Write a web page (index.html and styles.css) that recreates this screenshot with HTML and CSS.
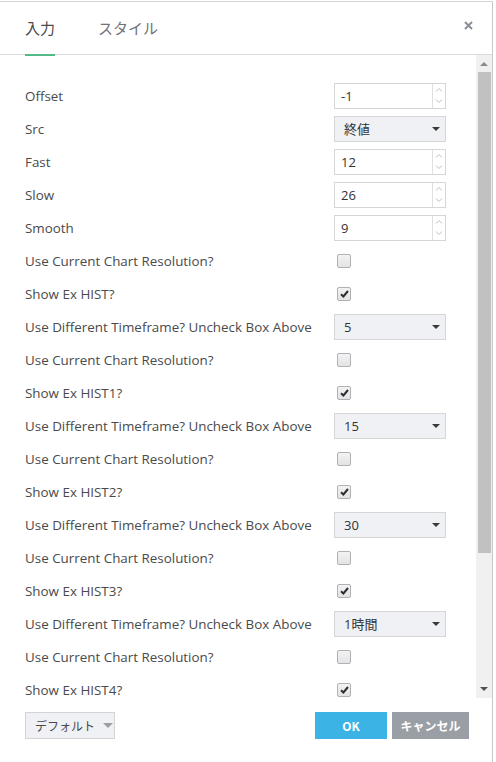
FILE: index.html
```html
<!DOCTYPE html>
<html lang="ja">
<head>
<meta charset="utf-8">
<link rel="stylesheet" href="styles.css">
</head>
<body>
<div class="dialog">
  <div class="header">
    <div class="tab active">入力</div>
    <div class="tab">スタイル</div>
    <div class="close">
      <svg width="9" height="9" viewBox="0 0 9 9"><path d="M1 1L8 8M8 1L1 8" stroke="#8b8f97" stroke-width="2" fill="none"/></svg>
    </div>
  </div>
  <div class="body">
    <div class="content">
      <div class="row"><span class="label">Offset</span>
        <div class="num"><span class="val">-1</span><span class="spin"><svg width="8" height="5" viewBox="0 0 8 5"><path d="M1 4.5L4 1.5L7 4.5" stroke="#b9bcc2" fill="none"/></svg><svg width="8" height="5" viewBox="0 0 8 5"><path d="M1 0.5L4 3.5L7 0.5" stroke="#b9bcc2" fill="none"/></svg></span></div></div>
      <div class="row"><span class="label">Src</span>
        <div class="select"><span class="val">終値</span><span class="caret"></span></div></div>
      <div class="row"><span class="label">Fast</span>
        <div class="num"><span class="val">12</span><span class="spin"><svg width="8" height="5" viewBox="0 0 8 5"><path d="M1 4.5L4 1.5L7 4.5" stroke="#b9bcc2" fill="none"/></svg><svg width="8" height="5" viewBox="0 0 8 5"><path d="M1 0.5L4 3.5L7 0.5" stroke="#b9bcc2" fill="none"/></svg></span></div></div>
      <div class="row"><span class="label">Slow</span>
        <div class="num"><span class="val">26</span><span class="spin"><svg width="8" height="5" viewBox="0 0 8 5"><path d="M1 4.5L4 1.5L7 4.5" stroke="#b9bcc2" fill="none"/></svg><svg width="8" height="5" viewBox="0 0 8 5"><path d="M1 0.5L4 3.5L7 0.5" stroke="#b9bcc2" fill="none"/></svg></span></div></div>
      <div class="row"><span class="label">Smooth</span>
        <div class="num"><span class="val">9</span><span class="spin"><svg width="8" height="5" viewBox="0 0 8 5"><path d="M1 4.5L4 1.5L7 4.5" stroke="#b9bcc2" fill="none"/></svg><svg width="8" height="5" viewBox="0 0 8 5"><path d="M1 0.5L4 3.5L7 0.5" stroke="#b9bcc2" fill="none"/></svg></span></div></div>

      <div class="row"><span class="label">Use Current Chart Resolution?</span><span class="cb"></span></div>
      <div class="row"><span class="label">Show Ex HIST?</span><span class="cb checked"><svg width="9" height="8" viewBox="0 0 9 8"><path d="M1 4.2L3.4 6.5L8 1" stroke="#2e2e2e" stroke-width="2" fill="none"/></svg></span></div>
      <div class="row"><span class="label">Use Different Timeframe? Uncheck Box Above</span>
        <div class="select"><span class="val">5</span><span class="caret"></span></div></div>

      <div class="row"><span class="label">Use Current Chart Resolution?</span><span class="cb"></span></div>
      <div class="row"><span class="label">Show Ex HIST1?</span><span class="cb checked"><svg width="9" height="8" viewBox="0 0 9 8"><path d="M1 4.2L3.4 6.5L8 1" stroke="#2e2e2e" stroke-width="2" fill="none"/></svg></span></div>
      <div class="row"><span class="label">Use Different Timeframe? Uncheck Box Above</span>
        <div class="select"><span class="val">15</span><span class="caret"></span></div></div>

      <div class="row"><span class="label">Use Current Chart Resolution?</span><span class="cb"></span></div>
      <div class="row"><span class="label">Show Ex HIST2?</span><span class="cb checked"><svg width="9" height="8" viewBox="0 0 9 8"><path d="M1 4.2L3.4 6.5L8 1" stroke="#2e2e2e" stroke-width="2" fill="none"/></svg></span></div>
      <div class="row"><span class="label">Use Different Timeframe? Uncheck Box Above</span>
        <div class="select"><span class="val">30</span><span class="caret"></span></div></div>

      <div class="row"><span class="label">Use Current Chart Resolution?</span><span class="cb"></span></div>
      <div class="row"><span class="label">Show Ex HIST3?</span><span class="cb checked"><svg width="9" height="8" viewBox="0 0 9 8"><path d="M1 4.2L3.4 6.5L8 1" stroke="#2e2e2e" stroke-width="2" fill="none"/></svg></span></div>
      <div class="row"><span class="label">Use Different Timeframe? Uncheck Box Above</span>
        <div class="select"><span class="val">1時間</span><span class="caret"></span></div></div>

      <div class="row"><span class="label">Use Current Chart Resolution?</span><span class="cb"></span></div>
      <div class="row"><span class="label">Show Ex HIST4?</span><span class="cb checked"><svg width="9" height="8" viewBox="0 0 9 8"><path d="M1 4.2L3.4 6.5L8 1" stroke="#2e2e2e" stroke-width="2" fill="none"/></svg></span></div>
    </div>
    <div class="scrollbar">
      <span class="arrow up"></span>
      <div class="track"><div class="thumb"></div></div>
      <span class="arrow down"></span>
    </div>
  </div>
  <div class="footer">
    <div class="defaults">デフォルト<span class="dcaret"></span></div>
    <div class="spacer"></div>
    <div class="btn ok">OK</div>
    <div class="btn cancel">キャンセル</div>
  </div>
</div>
</body>
</html>
```
FILE: styles.css
```css
html, body {
  margin: 0;
  padding: 0;
  background: #ffffff;
}
body {
  width: 496px;
  height: 762px;
  overflow: hidden;
  font-family: "Open Sans", "Noto Sans CJK JP", sans-serif;
  color: #4a4a4a;
}
.dialog {
  width: 493px;
  height: 761px;
  margin-top: 1px;
  border-top: 1px solid #d4d4d4;
  border-right: 1px solid #c8c8c8;
  box-sizing: border-box;
  background: #fff;
  display: flex;
  flex-direction: column;
}
.header {
  height: 53px;
  flex: none;
  border-bottom: 1px solid #dcdcdc;
  display: flex;
  align-items: stretch;
  padding-left: 25px;
  position: relative;
  box-sizing: border-box;
}
.tab {
  font-family: "Noto Sans CJK JP", sans-serif;
  font-size: 15px;
  color: #6f737b;
  display: flex;
  align-items: center;
  margin-right: 43px;
  padding-bottom: 2px;
  position: relative;
  box-sizing: border-box;
}
.tab.active {
  color: #4a4a4a;
}
.tab.active::after {
  content: "";
  position: absolute;
  left: 0;
  right: 0;
  bottom: -2px;
  height: 2px;
  background: #53b987;
}
.close {
  position: absolute;
  right: 19px;
  top: 19px;
  line-height: 0;
}
.close svg {
  display: block;
}
.body {
  height: 643px;
  flex: none;
  display: flex;
  overflow: hidden;
}
.content {
  flex: 1;
  padding-top: 24px;
  padding-left: 25px;
  padding-right: 30px;
  overflow: hidden;
}
.row {
  height: 33px;
  display: flex;
  align-items: center;
  justify-content: space-between;
}
.label {
  font-size: 13.4px;
  color: #4a4a4a;
  white-space: nowrap;
}
.num, .select {
  width: 112px;
  height: 26px;
  box-sizing: border-box;
  border: 1px solid #d6d6d6;
  display: flex;
  align-items: center;
  font-size: 13px;
  color: #333;
}
.num .val, .select .val {
  flex: 1;
  padding-left: 6px;
  font-family: "Open Sans", "Noto Sans CJK JP", sans-serif;
}
.select {
  background: #f0f1f5;
}
.select .val {
  padding-left: 9px;
}
.spin {
  width: 13px;
  height: 100%;
  border-left: 1px solid #e0e0e0;
  display: flex;
  flex-direction: column;
  align-items: center;
  justify-content: space-around;
  box-sizing: border-box;
}
.spin svg {
  display: block;
}
.caret {
  width: 0;
  height: 0;
  border-left: 4px solid transparent;
  border-right: 4px solid transparent;
  border-top: 4px solid #3a3a3a;
  margin-right: 5px;
}
.cb {
  width: 12px;
  height: 12px;
  margin-right: 95px;
  border: 1px solid #aeb1b6;
  border-radius: 2px;
  background: linear-gradient(#f3f3f3, #e3e3e3);
  display: flex;
  align-items: center;
  justify-content: center;
}
.cb svg {
  display: block;
}
.scrollbar {
  width: 16px;
  flex: none;
  background: #f0f0f0;
  display: flex;
  flex-direction: column;
  align-items: center;
}
.arrow {
  flex: none;
  width: 0;
  height: 0;
  border-left: 4px solid transparent;
  border-right: 4px solid transparent;
  margin: 6px 0;
}
.arrow.up {
  border-bottom: 4px solid #8a8a8a;
  margin-top: 7px;
}
.arrow.down {
  border-top: 4px solid #505050;
  margin-bottom: 7px;
}
.track {
  flex: 1;
  width: 100%;
  padding: 0 1px;
  box-sizing: border-box;
  display: flex;
  flex-direction: column;
}
.thumb {
  height: 481px;
  background: #c1c1c1;
  margin-left: 1px;
}
.footer {
  flex: 1;
  display: flex;
  align-items: flex-start;
  padding: 14px 23px 0 25px;
}
.spacer {
  flex: 1;
}
.defaults {
  height: 27px;
  width: 90px;
  flex: none;
  box-sizing: border-box;
  border: 1px solid #d4d4d4;
  background: #f0f1f5;
  font-family: "Noto Sans CJK JP", sans-serif;
  font-size: 12px;
  white-space: nowrap;
  color: #4a4a4a;
  display: flex;
  align-items: center;
  padding-left: 9px;
}
.dcaret {
  flex: none;
  width: 0;
  height: 0;
  border-left: 5px solid transparent;
  border-right: 5px solid transparent;
  border-top: 5px solid #9a9ea5;
  margin-left: 8px;
}
.btn {
  height: 27px;
  display: flex;
  align-items: center;
  justify-content: center;
  color: #fff;
  font-weight: bold;
  font-size: 12px;
  white-space: nowrap;
  font-family: "Noto Sans CJK JP", sans-serif;
}
.ok {
  width: 72px;
  background: #3bb3e4;
  margin-right: 5px;
}
.cancel {
  width: 77px;
  background: #9a9ea5;
}
```
